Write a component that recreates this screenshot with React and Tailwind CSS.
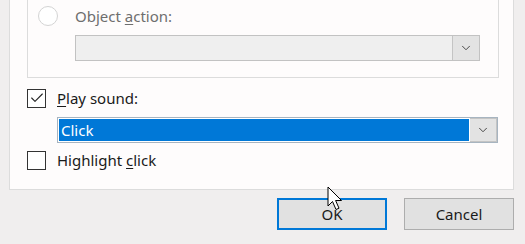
import { Check, ChevronDown } from "lucide-react";

const font = { fontFamily: '"Noto Sans", "Liberation Sans", sans-serif' };

const DropButton = ({ className = "" }) => (
  <div className={"flex items-center justify-center w-[27px] h-full bg-[#e3e3e3] border-l border-[#c4c4c4] " + className}>
    <ChevronDown size={14} strokeWidth={1.5} className="text-[#333]" />
  </div>
);

export default function App() {
  return (
    <div className="relative w-[525px] h-[244px] bg-[#f0eeee] overflow-hidden text-[15px] text-[#1a1a1a]" style={font}>
      {/* white panel */}
      <div className="ml-[9px] w-[505px] h-[190px] bg-[#fefcfc] border-b border-l border-r border-[#dcdcdc]">
        {/* group box */}
        <div className="ml-[17px] w-[472px] h-[78px] border-b border-l border-r border-[#dcdcdc]">
          <div className="flex items-center h-[32px] pl-[10px]">
            <div className="w-[20px] h-[20px] rounded-full border border-[#d4d4d4] bg-white" />
            <span className="ml-[17px] text-[#6e6e6e] leading-none">
              Object <span className="underline underline-offset-2">a</span>ction:
            </span>
          </div>
          <div className="ml-[47px] mt-[3px] w-[405px] h-[26px] flex justify-end bg-[#efefef] border border-[#c2c2c2]">
            <DropButton />
          </div>
        </div>

        <div className="flex items-center ml-[17px] mt-[10px] h-[20px]">
          <div className="w-[19px] h-[19px] border border-[#333] bg-white flex items-center justify-center">
            <Check size={16} strokeWidth={1.6} className="text-[#222]" />
          </div>
          <span className="ml-[11px] leading-none">
            <span className="underline underline-offset-2">P</span>lay sound:
          </span>
        </div>

        <div className="ml-[47px] mt-[9px] w-[441px] h-[26px] flex bg-white border border-[#a7b4c0]">
          <div className="flex-1 m-[1px] bg-[#0078d7] text-white flex items-center pl-[2px] leading-none">
            Click
          </div>
          <DropButton className="border-l-0 border border-[#adadad]" />
        </div>

        <div className="flex items-center ml-[17px] mt-[7px] h-[20px]">
          <div className="w-[19px] h-[19px] border border-[#333] bg-white" />
          <span className="ml-[11px] leading-none">
            Highlight <span className="underline underline-offset-2">c</span>lick
          </span>
        </div>
      </div>

      {/* buttons */}
      <div className="flex justify-end gap-[17px] pr-[11px] mt-[8px]">
        <button className="w-[110px] h-[32px] bg-[#e1e1e1] border-2 border-[#0078d7] leading-none">
          OK
        </button>
        <button className="w-[110px] h-[32px] bg-[#e1e1e1] border border-[#adadad] leading-none">
          Cancel
        </button>
      </div>

      {/* mouse cursor */}
      <svg className="absolute left-[327px] top-[186px]" width="20" height="28" viewBox="0 0 20 28">
        <path d="M1 1 L1 20 L5.5 15.5 L9 23.5 L12 22.2 L8.6 14.5 L14.5 14.5 Z" fill="white" stroke="black" strokeWidth="1" strokeLinejoin="round" />
      </svg>
    </div>
  );
}
